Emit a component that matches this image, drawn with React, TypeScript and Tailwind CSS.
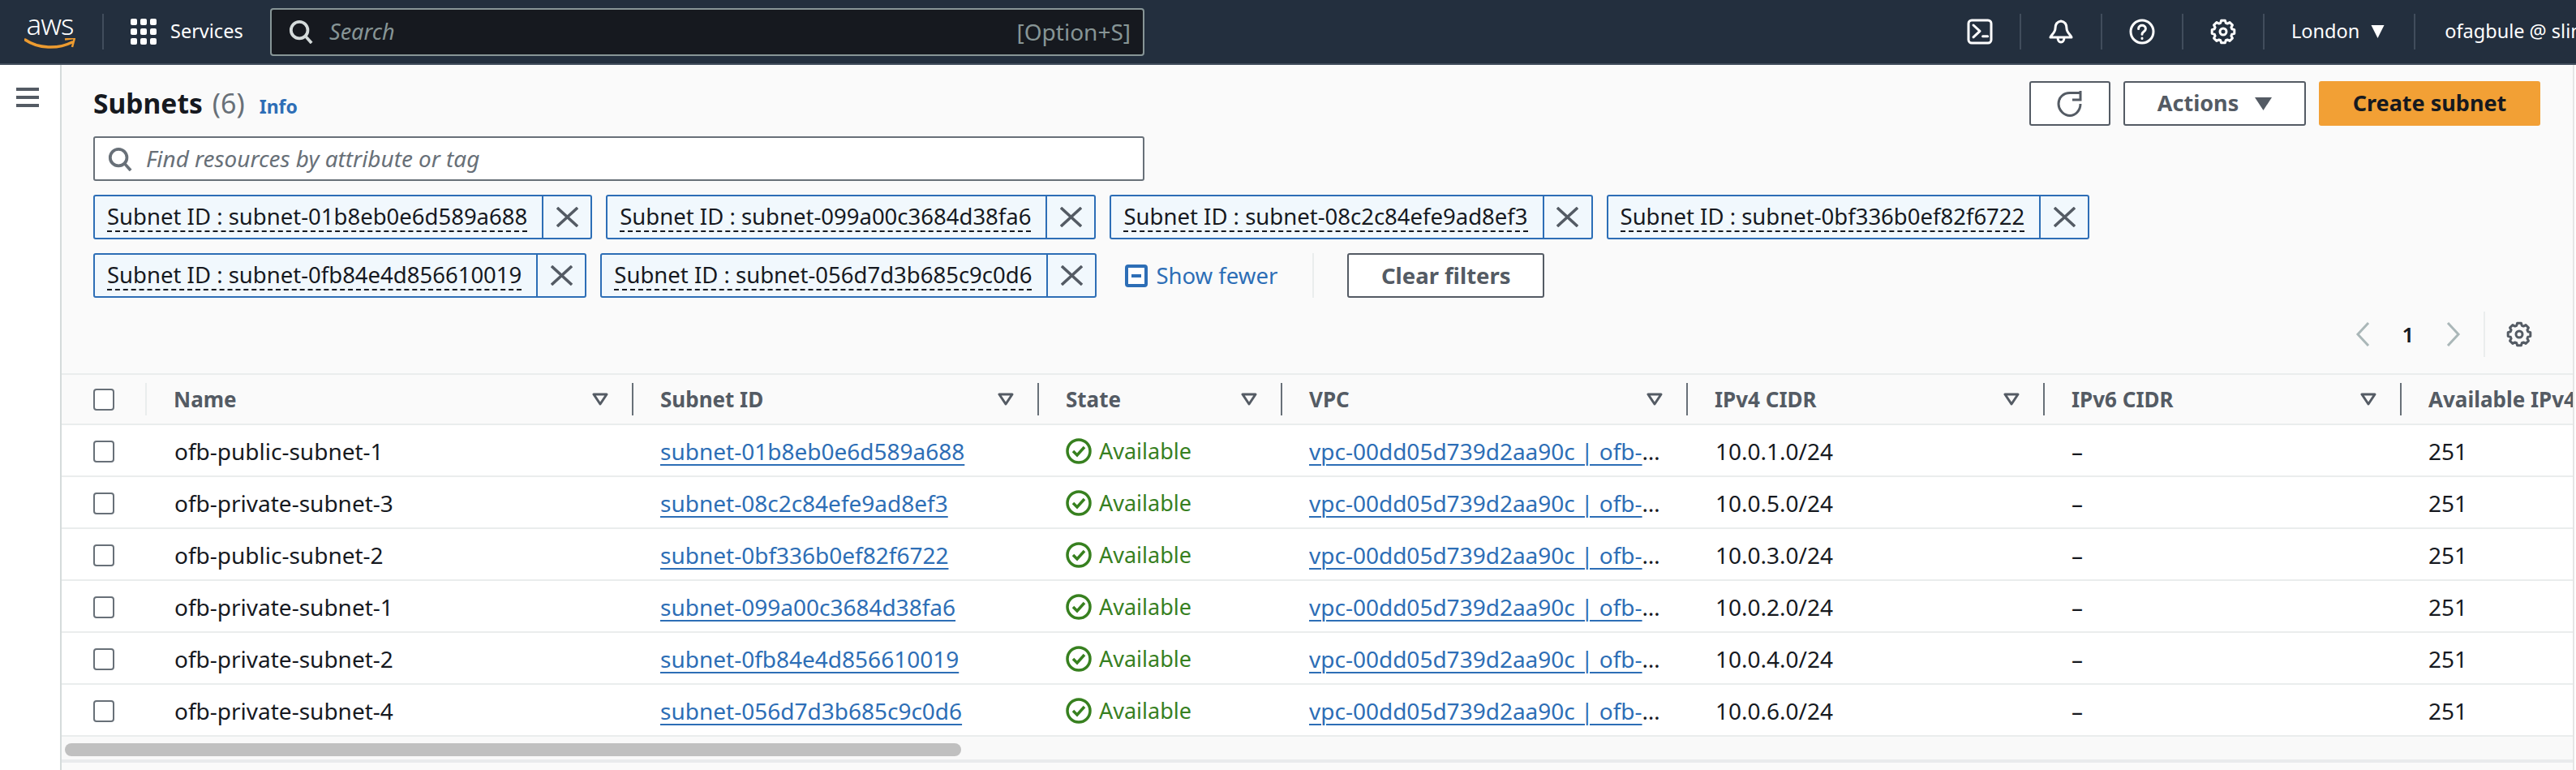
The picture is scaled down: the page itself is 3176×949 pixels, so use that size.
const tokens = [
    'subnet-01b8eb0e6d589a688',
    'subnet-099a00c3684d38fa6',
    'subnet-08c2c84efe9ad8ef3',
    'subnet-0bf336b0ef82f6722',
    'subnet-0fb84e4d856610019',
    'subnet-056d7d3b685c9c0d6',
];

const columns = [
    { label: 'Name', width: 'w-[600px]' },
    { label: 'Subnet ID', width: 'w-[500px]' },
    { label: 'State', width: 'w-[300px]' },
    { label: 'VPC', width: 'w-[500px]' },
    { label: 'IPv4 CIDR', width: 'w-[440px]' },
    { label: 'IPv6 CIDR', width: 'w-[440px]' },
];

const rows = [
    { name: 'ofb-public-subnet-1', id: 'subnet-01b8eb0e6d589a688', cidr: '10.0.1.0/24' },
    { name: 'ofb-private-subnet-3', id: 'subnet-08c2c84efe9ad8ef3', cidr: '10.0.5.0/24' },
    { name: 'ofb-public-subnet-2', id: 'subnet-0bf336b0ef82f6722', cidr: '10.0.3.0/24' },
    { name: 'ofb-private-subnet-1', id: 'subnet-099a00c3684d38fa6', cidr: '10.0.2.0/24' },
    { name: 'ofb-private-subnet-2', id: 'subnet-0fb84e4d856610019', cidr: '10.0.4.0/24' },
    { name: 'ofb-private-subnet-4', id: 'subnet-056d7d3b685c9c0d6', cidr: '10.0.6.0/24' },
];

// eight chunky teeth round a 16 unit box
const gearPath = Array.from({ length: 8 })
    .map((_, i) => {
        const a = (i * Math.PI) / 4;
        const pt = (r: number, d: number) =>
            `${(8 + r * Math.sin(a + d)).toFixed(2)} ${(8 - r * Math.cos(a + d)).toFixed(2)}`;
        return `${i === 0 ? 'M' : 'L'}${pt(5.6, -0.3)}L${pt(7, -0.17)}L${pt(7, 0.17)}L${pt(5.6, 0.3)}`;
    })
    .join('') + 'Z';

const NavDivider = () => <div className="mx-[33px] h-[44px] w-[2px] shrink-0 bg-[#414d5c]" />;

const SearchIcon = ({ className }: { className: string }) => (
    <svg viewBox="0 0 16 16" fill="none" stroke="currentColor" strokeWidth="2" className={className}>
        <circle cx="7" cy="7" r="5.5" />
        <path d="M11 11l4 4.5" />
    </svg>
);

const IconBox = ({ children, className = 'text-white' }: { children: React.ReactNode; className?: string }) => (
    <svg
        viewBox="0 0 16 16"
        fill="none"
        stroke="currentColor"
        strokeWidth="1.5"
        strokeLinejoin="round"
        strokeLinecap="round"
        className={`h-[32px] w-[32px] shrink-0 ${className}`}
    >
        {children}
    </svg>
);

const GearIcon = ({ className }: { className?: string }) => (
    <IconBox className={className}>
        <path d={gearPath} />
        <circle cx="8" cy="8" r="2" />
    </IconBox>
);

const TopNav = () => (
    <header className="flex h-[80px] shrink-0 items-center overflow-hidden whitespace-nowrap border-b-2 border-[#414d5c] bg-[#232f3e] text-[23.5px] text-white">
        <div className="ml-[30px] flex w-[63px] shrink-0 flex-col items-center">
            <span className="h-[28px] text-[35px] font-light leading-[28px] tracking-[-1px]">aws</span>
            <svg viewBox="0 0 63 16" className="mt-[3px] h-[16px] w-[63px]" fill="none">
                <path d="M1 2c16 11 40 12 58 3" stroke="#ec9b30" strokeWidth="3.5" strokeLinecap="round" />
                <path d="M50 1.5l12-1.5-3 11" stroke="#ec9b30" strokeWidth="2.5" strokeLinejoin="round" />
            </svg>
        </div>
        <div className="mx-[33px] h-[44px] w-[2px] shrink-0 bg-[#414d5c]" />
        <div className="grid h-[32px] w-[32px] shrink-0 grid-cols-3 gap-[4px]">
            {Array.from({ length: 9 }).map((_, i) => (
                <div key={i} className="rounded-[2px] bg-white" />
            ))}
        </div>
        <span className="ml-[17px] w-[87px] shrink-0">Services</span>
        <div className="ml-[36px] flex h-[59px] w-[1078px] shrink-0 items-center rounded-[4px] border-2 border-[#879596] bg-[#16191f] pl-[21px] pr-[15px] text-[#879596]">
            <SearchIcon className="h-[30px] w-[30px] shrink-0 text-[#d5dbdb]" />
            <span className="ml-[20px] text-[27px] italic">Search</span>
            <span className="ml-auto text-[28px]">[Option+S]</span>
        </div>
        <div className="ml-[1014px] flex shrink-0 items-center">
            <IconBox>
                <rect x="1" y="1" width="14" height="14" rx="2" />
                <path d="M4 4l4 3.700-4 3.700M9.800 10.900h3" />
            </IconBox>
            <NavDivider />
            <IconBox>
                <path d="M8 1.500C5 2 4.500 4 4.500 6c0 2.500-2.500 4-3 5.500h13c-.5-1.500-3-3-3-5.500 0-2-.5-4-3.500-4.500zM6 11.500c0 4 4 4 4 0" />
            </IconBox>
            <NavDivider />
            <IconBox>
                <circle cx="8" cy="8" r="7" />
                <path d="M5.800 6.200c0-2.700 4.400-2.700 4.400 0 0 1.800-2.200 1.800-2.200 3.400M8 12v.2" />
            </IconBox>
            <NavDivider />
            <GearIcon />
            <NavDivider />
            <span>London</span>
            <svg viewBox="0 0 16 16" className="ml-[14px] mr-[3px] h-[16px] w-[17px] shrink-0 fill-white">
                <path d="M0 0h16L8 16z" />
            </svg>
            <NavDivider />
            <span className="ml-[3px]">ofagbule @ slim</span>
        </div>
    </header>
);

const FilterToken = ({ value }: { value: string }) => (
    <div className="flex h-[55px] items-stretch rounded-[3px] border-2 border-[#2d6eb6] bg-[#f1f8fd] text-[27.5px] text-[#16191f]">
        <div className="flex items-center pl-[15px] pr-[18px]">
            <span className="whitespace-nowrap border-b-2 border-dashed border-[#16191f] leading-[34px]">
                Subnet ID : {value}
            </span>
        </div>
        <div className="flex w-[60px] items-center justify-center border-l-2 border-[#2d6eb6] text-[#545b64]">
            <svg viewBox="0 0 27 25" fill="none" stroke="currentColor" strokeWidth="3.5" className="h-[25px] w-[27px]">
                <path d="M1 1l25 23M26 1L1 24" />
            </svg>
        </div>
    </div>
);

const FilterCaret = () => (
    <svg viewBox="0 0 20 16" fill="none" stroke="#545b64" strokeWidth="3" className="h-[16px] w-[20px] shrink-0">
        <path d="M2 2h16l-8 12z" strokeLinejoin="round" />
    </svg>
);

const HeaderCell = ({ label, width }: { label: string; width: string }) => (
    <div className={`flex shrink-0 items-center pl-[33px] ${width}`}>
        <span className="font-bold">{label}</span>
        <div className="ml-auto mr-[29px]">
            <FilterCaret />
        </div>
        <div className="h-[40px] w-[2px] bg-[#687078]" />
    </div>
);

const Checkbox = () => <div className="h-[27px] w-[26px] rounded-[4px] border-2 border-[#687078] bg-white" />;

const StatusIcon = () => (
    <svg viewBox="0 0 32 32" fill="none" stroke="currentColor" strokeWidth="3.500" className="h-[32px] w-[32px] shrink-0">
        <circle cx="16" cy="16" r="14" />
        <path d="M9 16l5 5 9-10" />
    </svg>
);

const SubnetRow = ({ name, id, cidr }: { name: string; id: string; cidr: string }) => (
    <div className="flex h-[64px] items-center border-b-2 border-[#eaeded] bg-white pt-[2px] whitespace-nowrap text-[28px] text-[#16191f]">
        <div className="w-[105px] shrink-0 pl-[39px]">
            <Checkbox />
        </div>
        <div className="w-[600px] shrink-0 pl-[34px]">{name}</div>
        <div className="w-[500px] shrink-0 pl-[33px]">
            <a className="text-[#2d6eb6] underline decoration-2 underline-offset-[5px]">{id}</a>
        </div>
        <div className="flex w-[300px] shrink-0 items-center gap-[9px] pl-[33px] text-[27px] text-[#37801f]">
            <StatusIcon />
            <span>Available</span>
        </div>
        <div className="w-[500px] shrink-0 pl-[33px] pr-[30px]">
            <div className="truncate">
                <a className="text-[#2d6eb6] underline decoration-2 underline-offset-[5px]">
                    vpc-00dd05d739d2aa90c | ofb-vpc
                </a>
            </div>
        </div>
        <div className="w-[440px] shrink-0 pl-[34px]">{cidr}</div>
        <div className="w-[440px] shrink-0 pl-[33px]">–</div>
        <div className="w-[440px] shrink-0 pl-[33px]">251</div>
    </div>
);

const App = () => (
    <div className="flex h-screen w-full flex-col overflow-hidden bg-white font-['Noto_Sans','Open_Sans',sans-serif] text-[27.5px]">
        <TopNav />
        <div className="flex min-h-0 flex-1">
            <aside className="w-[76px] shrink-0 border-r-2 border-[#d5dbdb] bg-white pl-[20px] pt-[28px]">
                <div className="flex h-[24px] w-[28px] flex-col justify-between">
                    <div className="h-[4px] bg-[#545b64]" />
                    <div className="h-[4px] bg-[#545b64]" />
                    <div className="h-[4px] bg-[#545b64]" />
                </div>
            </aside>
            <main className="mr-[2px] min-w-0 flex-1 overflow-hidden border-r-2 border-[#e5e5e5] bg-[#fafafa]">
                <div className="pl-[39px] pr-[40px] pt-[20px]">
                    <div className="flex h-[55px] items-center justify-between">
                        <div className="flex items-baseline">
                            <h1 className="text-[33.6px] font-bold text-[#16191f]">Subnets</h1>
                            <span className="ml-[12px] text-[34px] text-[#687078]">(6)</span>
                            <a className="ml-[18px] text-[23px] font-bold text-[#2d6eb6]">Info</a>
                        </div>
                        <div className="flex gap-[16px] text-[27px] font-bold">
                            <button className="flex h-[55px] w-[100px] items-center justify-center rounded-[3px] border-2 border-[#545b64] bg-white text-[#545b64]">
                                <svg viewBox="0 0 32 32" fill="none" stroke="currentColor" strokeWidth="3" className="h-[32px] w-[32px]">
                                    <path d="M29 16c0 8-6 14.500-13 14.500S2 24 2 16 8 2.500 16 2.500h12" />
                                    <path d="M29 0v11H19" />
                                </svg>
                            </button>
                            <button className="flex h-[55px] w-[225px] items-center justify-center gap-[20px] rounded-[3px] border-2 border-[#545b64] bg-white text-[#545b64]">
                                Actions
                                <svg viewBox="0 0 21 16" className="h-[16px] w-[21px] fill-[#545b64]">
                                    <path d="M0 0h21L10.500 16z" />
                                </svg>
                            </button>
                            <button className="h-[55px] w-[273px] rounded-[3px] bg-[#f2a035] text-[#16191f]">Create subnet</button>
                        </div>
                    </div>

                    <div className="mt-[13px] flex h-[55px] w-[1296px] items-center rounded-[3px] border-2 border-[#687078] bg-white pl-[16px] text-[#687078]">
                        <SearchIcon className="h-[30px] w-[30px] shrink-0 text-[#687078]" />
                        <span className="ml-[17px] text-[27.9px] italic">Find resources by attribute or tag</span>
                    </div>

                    <div className="mt-[17px] flex flex-wrap items-center gap-[17px]">
                        {tokens.map((value) => (
                            <FilterToken key={value} value={value} />
                        ))}
                        <div className="ml-[18px] flex items-center gap-[10px] text-[#2d6eb6]">
                            <svg viewBox="0 0 28 28" className="h-[28px] w-[28px]">
                                <rect x="2" y="2" width="24" height="24" rx="2" fill="white" stroke="#2d6eb6" strokeWidth="4" />
                                <path d="M8 14h12" stroke="#2d6eb6" strokeWidth="4" />
                            </svg>
                            Show fewer
                        </div>
                        <div className="ml-[26px] h-[55px] w-[2px] bg-[#eaeded]" />
                        <button className="ml-[24px] h-[55px] w-[243px] rounded-[3px] border-2 border-[#545b64] bg-white font-bold text-[#545b64]">
                            Clear filters
                        </button>
                    </div>

                    <div className="mt-[17px] flex h-[56px] items-center justify-end pr-[10px]">
                        <svg viewBox="0 0 18 30" fill="none" stroke="#aab7b8" strokeWidth="3" className="h-[30px] w-[18px]">
                            <path d="M16 1L3 15l13 14" />
                        </svg>
                        <span className="w-[94px] text-center text-[26px] font-semibold text-[#16191f]">1</span>
                        <svg viewBox="0 0 18 30" fill="none" stroke="#aab7b8" strokeWidth="3" className="h-[30px] w-[18px]">
                            <path d="M2 1l13 14L2 29" />
                        </svg>
                        <div className="ml-[28px] h-[56px] w-[2px] bg-[#eaeded]" />
                        <div className="ml-[26px]">
                            <GearIcon className="text-[#545b64]" />
                        </div>
                    </div>
                </div>

                <div className="mt-[20px] border-t-2 border-[#eaeded]">
                    <div className="flex h-[62px] items-center whitespace-nowrap border-b-2 border-[#eaeded] bg-[#fafafa] text-[26px] text-[#545b64]">
                        <div className="flex w-[105px] shrink-0 items-center justify-between pl-[39px]">
                            <Checkbox />
                            <div className="h-[40px] w-[2px] bg-[#eaeded]" />
                        </div>
                        {columns.map((column) => (
                            <HeaderCell key={column.label} label={column.label} width={column.width} />
                        ))}
                        <div className="w-[440px] shrink-0 pl-[33px] font-bold">Available IPv4 addresses</div>
                    </div>
                    {rows.map((row) => (
                        <SubnetRow key={row.id} {...row} />
                    ))}
                </div>
                <div className="h-[32px] border-b-4 border-[#e9ebed] bg-[#f9f9f9] pl-[4px] pt-[8px]">
                    <div className="h-[16px] w-[1105px] rounded-[8px] bg-[#c0c0c0]" />
                </div>
            </main>
        </div>
    </div>
);

export default App;
